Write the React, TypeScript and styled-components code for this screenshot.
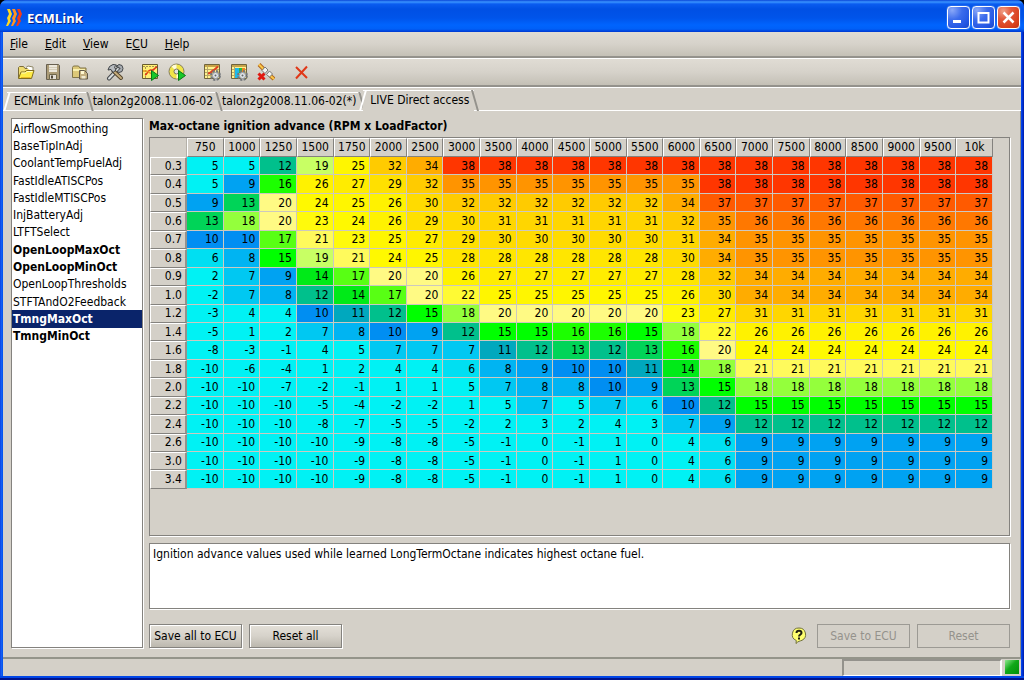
import React, { useState } from "react";
import styled, { createGlobalStyle, css } from "styled-components";

const face = "#d4d0c8";
const sans = '"DejaVu Sans Condensed", "DejaVu Sans", sans-serif';

const GlobalStyle = createGlobalStyle`
  * { box-sizing: border-box; }
  body { margin: 0; background: #000; color: #000; font: 12px/16px ${sans}; }
  button, textarea { font: inherit; color: inherit; }
`;

const Window = styled.div`
  display: flex;
  flex-direction: column;
  min-height: 100vh;
  padding: 0 3px 4px;
  border-radius: 7px 7px 0 0;
  background: linear-gradient(to right, #0831d9 0, #1763f5 1px, #0050ee 3px, #0050ee calc(100% - 3px), #0038e8 calc(100% - 2px), #001ca0 100%);
  box-shadow: inset 0 -2px 0 #00138c, inset 0 -4px 0 #0046e8;
`;

const TitleBar = styled.header`
  display: flex;
  align-items: center;
  gap: 5px;
  height: 32px;
  margin: 0 -3px;
  padding: 3px 4px 0 6px;
  border-radius: 7px 7px 0 0;
  background: linear-gradient(#0a46d8 0, #3a94ff 2px, #0a5cf0 4px, #0050e4 9px, #0054ea 18px, #0064fe 25px, #0060f8 29px, #0038d0 32px);
`;

const Title = styled.h1`
  flex: 1;
  margin: 0;
  color: #fff;
  font: bold 13px/18px "Open Sans", sans-serif;
  text-shadow: 1px 1px 0 #0a1e80;
`;

const Captions = styled.div`
  display: flex;
  gap: 2px;
`;

const CaptionButton = styled.button<{ $close?: boolean }>`
  display: grid;
  width: 23px;
  height: 23px;
  padding: 0;
  place-items: center;
  border: 1px solid #fff;
  border-radius: 4px;
  background: ${(p) =>
    p.$close
      ? "radial-gradient(circle at 25% 20%, #f0a088 0, #e2583a 35%, #d8401c 75%, #c03010 100%)"
      : "radial-gradient(circle at 20% 15%, #8aa8f8 0, #3c6cec 40%, #2458e4 75%, #1848c8 100%)"};
  box-shadow: 0 0 1px #fff;
`;

const bar = css`
  display: flex;
  align-items: center;
  background: linear-gradient(#e0dcd4, #d6d2ca 50%, #c4c0b6);
`;

const MenuBar = styled.nav`
  ${bar}
  gap: 17px;
  height: 26px;
  padding: 0 7px;
  border-bottom: 2px solid #94928c;
`;

const MenuButton = styled.button`
  padding: 0;
  border: 0;
  background: none;
`;

const ToolBar = styled.div`
  ${bar}
  gap: 17px;
  height: 29px;
  padding: 0 14px;
  border-top: 1px solid #fff;
  border-bottom: 2px solid #94928c;
`;

const ToolGroup = styled.div`
  display: flex;
  gap: 9px;
`;

const ToolButton = styled.button`
  width: 18px;
  height: 18px;
  padding: 0;
  border: 0;
  background: none;
  svg { display: block; }
`;

const TabStrip = styled.div`
  display: flex;
  align-items: flex-end;
  height: 24px;
  padding-left: 4px;
  border-top: 1px solid #fff;
  background: ${face};
  box-shadow: inset 0 -1px 0 #fff;
`;

const Tab = styled.button<{ $active: boolean; $lead: boolean }>`
  position: relative;
  height: ${(p) => (p.$active ? 21 : 19)}px;
  margin-right: 2px;
  padding: 0 5px 3px ${(p) => (p.$lead ? 7 : 2)}px;
  border: 0;
  border-top: 1px solid #fff;
  background: ${(p) => (p.$active ? face : "none")};
  white-space: nowrap;
  &::before {
    content: "";
    position: absolute;
    top: -1px;
    bottom: 0;
    left: -1px;
    border-left: ${(p) => (p.$lead ? "2px solid #fff" : "0")};
    transform: skewX(-16deg);
  }
  &::after {
    content: "";
    position: absolute;
    top: -1px;
    bottom: 0;
    right: -2px;
    border-left: 2px solid #94928c;
    transform: skewX(16deg);
  }
`;

const Content = styled.main`
  display: grid;
  flex: 1;
  grid-template-columns: 132px minmax(0, 1fr);
  gap: 6px;
  padding: 7px 10px 9px 8px;
  border-right: 1px solid #8c8a84;
  border-bottom: 2px solid #94948a;
  background: ${face};
`;

const sunken = css`
  border: 1px solid #84827e;
  box-shadow: 1px 1px 0 #fff;
`;

const ListPane = styled.div`
  ${sunken}
  background: #fff;
`;

const ItemList = styled.ul`
  display: grid;
  height: 226px;
  margin: 0;
  padding: 1px 0 0;
  grid-auto-rows: 1fr;
  list-style: none;
`;

const Item = styled.button<{ $bold: boolean; $selected: boolean }>`
  display: block;
  width: 100%;
  height: 100%;
  padding: 0 1px;
  border: 0;
  background: ${(p) => (p.$selected ? "#0a246a" : "transparent")};
  color: ${(p) => (p.$selected ? "#fff" : "#000")};
  font-weight: ${(p) => (p.$bold ? "bold" : "normal")};
  text-align: left;
`;

const Detail = styled.section`
  display: flex;
  flex-direction: column;
  min-width: 0;
`;

const Heading = styled.h2`
  margin: 0 0 3px;
  font: bold 12px/16px ${sans};
`;

const TablePane = styled.div`
  ${sunken}
  flex: 1;
  margin-bottom: 7px;
  padding-right: 16px;
`;

const MapTable = styled.table`
  width: 100%;
  height: 351px;
  border-collapse: separate;
  border-spacing: 0;
  table-layout: fixed;
  line-height: 15px;
  td, th { padding: 0; font-weight: normal; }
`;

const ColHead = styled.th`
  height: 19px;
  border: 1px solid #fff;
  border-right-color: #84827e;
  border-bottom-color: #84827e;
`;

const Corner = styled.td`
  width: 37px;
  border-right: 1px solid #b4b0a8;
`;

const RowHead = styled.th`
  border: 1px solid #fff;
  border-right: 2px solid #94928c;
  border-bottom-color: #84827e;
  && { padding-right: 3px; }
  text-align: right;
`;

const ValueCell = styled.td<{ $fill: string }>`
  border-right: 1px solid #ccc8c0;
  border-bottom: 1px solid #ccc8c0;
  background: ${(p) => p.$fill};
  && { padding: 1px 4px 0 0; }
  text-align: right;
`;

const Description = styled.textarea`
  ${sunken}
  display: block;
  width: 100%;
  height: 66px;
  padding: 2px 3px;
  outline: 0;
  background: #fff;
  resize: none;
`;

const Actions = styled.div`
  display: flex;
  align-items: center;
  gap: 7px;
  margin-top: 15px;
`;

const HelpButton = styled.button`
  width: 16px;
  height: 18px;
  margin: 0 3px 0 auto;
  padding: 0;
  border: 0;
  background: none;
  svg { display: block; }
`;

const PushButton = styled.button`
  width: 93px;
  height: 24px;
  padding: 0;
  border: 1px solid #84827e;
  background: linear-gradient(#e4e0d8, #d6d2ca 50%, #bcb8ae);
  box-shadow: inset 1px 1px 0 #fff, 1px 1px 0 #fff;
  white-space: nowrap;
  &:disabled {
    border-color: #9c9a94;
    background: ${face};
    box-shadow: none;
    color: #94928c;
  }
`;

const StatusBar = styled.footer`
  display: flex;
  justify-content: flex-end;
  gap: 3px;
  height: 17px;
  padding-right: 2px;
  background: ${face};
`;

const StatusField = styled.div`
  width: 160px;
  border: 2px solid #94928c;
  border-right-color: #fff;
  border-bottom: 1px solid #fff;
`;

const StatusLight = styled.div`
  width: 14px;
  height: 14px;
  margin-top: 1px;
  background: linear-gradient(135deg, #90e890, #10a818 45%, #009008);
`;

const fills: Record<number, string> = {
  6: "#00dff2", 7: "#00c8f2", 8: "#00b4f2", 9: "#00a2f2", 10: "#008ef2",
  11: "#00a8be", 12: "#00c08c", 13: "#00d458", 14: "#00ea18", 15: "#00ff00",
  16: "#1cff00", 17: "#58ff14", 18: "#94ff3c", 19: "#c8ff64", 20: "#fffa84",
  21: "#fffa5c", 22: "#fffa34", 23: "#fffa0c", 24: "#fff900", 25: "#fff600",
  26: "#fff200", 27: "#ffec00", 28: "#ffe600", 29: "#ffe000", 30: "#ffdb00",
  31: "#ffd600", 32: "#ffcb00", 34: "#ffac00", 35: "#ff9400", 36: "#ff7800",
  37: "#ff5a00", 38: "#ff3600",
};

const columns = ["750", "1000", "1250", "1500", "1750", "2000", "2500", "3000", "3500", "4000", "4500", "5000", "5500", "6000", "6500", "7000", "7500", "8000", "8500", "9000", "9500", "10k"];

const tail = (n: number): number[] => Array(7).fill(n);

const rows: [string, number[]][] = [
  ["0.3", [5, 5, 12, 19, 25, 32, 34, 38, 38, 38, 38, 38, 38, 38, 38, ...tail(38)]],
  ["0.4", [5, 9, 16, 26, 27, 29, 32, 35, 35, 35, 35, 35, 35, 35, 38, ...tail(38)]],
  ["0.5", [9, 13, 20, 24, 25, 26, 30, 32, 32, 32, 32, 32, 32, 34, 37, ...tail(37)]],
  ["0.6", [13, 18, 20, 23, 24, 26, 29, 30, 31, 31, 31, 31, 31, 32, 35, ...tail(36)]],
  ["0.7", [10, 10, 17, 21, 23, 25, 27, 29, 30, 30, 30, 30, 30, 31, 34, ...tail(35)]],
  ["0.8", [6, 8, 15, 19, 21, 24, 25, 28, 28, 28, 28, 28, 28, 30, 34, ...tail(35)]],
  ["0.9", [2, 7, 9, 14, 17, 20, 20, 26, 27, 27, 27, 27, 27, 28, 32, ...tail(34)]],
  ["1.0", [-2, 7, 8, 12, 14, 17, 20, 22, 25, 25, 25, 25, 25, 26, 30, ...tail(34)]],
  ["1.2", [-3, 4, 4, 10, 11, 12, 15, 18, 20, 20, 20, 20, 20, 23, 27, ...tail(31)]],
  ["1.4", [-5, 1, 2, 7, 8, 10, 9, 12, 15, 15, 16, 16, 15, 18, 22, ...tail(26)]],
  ["1.6", [-8, -3, -1, 4, 5, 7, 7, 7, 11, 12, 13, 12, 13, 16, 20, ...tail(24)]],
  ["1.8", [-10, -6, -4, 1, 2, 4, 4, 6, 8, 9, 10, 10, 11, 14, 18, ...tail(21)]],
  ["2.0", [-10, -10, -7, -2, -1, 1, 1, 5, 7, 8, 8, 10, 9, 13, 15, ...tail(18)]],
  ["2.2", [-10, -10, -10, -5, -4, -2, -2, 1, 5, 7, 5, 7, 6, 10, 12, ...tail(15)]],
  ["2.4", [-10, -10, -10, -8, -7, -5, -5, -2, 2, 3, 2, 4, 3, 7, 9, ...tail(12)]],
  ["2.6", [-10, -10, -10, -10, -9, -8, -8, -5, -1, 0, -1, 1, 0, 4, 6, ...tail(9)]],
  ["3.0", [-10, -10, -10, -10, -9, -8, -8, -5, -1, 0, -1, 1, 0, 4, 6, ...tail(9)]],
  ["3.4", [-10, -10, -10, -10, -9, -8, -8, -5, -1, 0, -1, 1, 0, 4, 6, ...tail(9)]],
];

const items: [string, boolean][] = [
  ["AirflowSmoothing", false], ["BaseTipInAdj", false], ["CoolantTempFuelAdj", false],
  ["FastIdleATISCPos", false], ["FastIdleMTISCPos", false], ["InjBatteryAdj", false],
  ["LTFTSelect", false], ["OpenLoopMaxOct", true], ["OpenLoopMinOct", true],
  ["OpenLoopThresholds", false], ["STFTAndO2Feedback", false], ["TmngMaxOct", true],
  ["TmngMinOct", true],
];

const tabs = ["ECMLink Info", "talon2g2008.11.06-02", "talon2g2008.11.06-02(*)", "LIVE Direct access"];

const Icon = ({ children }: { children: React.ReactNode }) => (
  <svg width="18" height="18" viewBox="0 0 18 18" fill="none" aria-hidden="true">{children}</svg>
);

const Logo = () => (
  <svg width="16" height="19" viewBox="0 0 16 19" aria-hidden="true">
    <path d="M1 1h3l2 5-2 5 1 2-3 5H0l2-5-1-3 2-4z" fill="#ffd820" />
    <path d="M6 1h3l2 5-2 5 1 2-3 5H5l2-5-1-3 2-4z" fill="#ff9420" />
    <path d="M11 1h3l2 5-2 5 1 2-3 5h-2l2-5-1-3 2-4z" fill="#f03c18" />
  </svg>
);

const OpenIcon = () => (
  <Icon>
    <path d="M1.500 15V4.500l1-1h4l1.500 2h6v3" fill="#f0dc70" stroke="#7c6c38" />
    <path d="M9 4.500l2-1.500 5 1v5" fill="#fff" stroke="#908868" />
    <path d="M1.500 15.500l2.500-6.500h4l1.500-1.500h7.500l-2.500 8z" fill="#ffec48" stroke="#806c20" />
    <path d="M4.500 10h4l1.500-1.500h5.500" stroke="#fffcc0" />
    <path d="M4 14.500h9.500" stroke="#e8b828" />
  </Icon>
);

const SaveIcon = () => (
  <Icon>
    <path d="M2.500 1.500h12l1 1v14h-13z" fill="#ac9c78" stroke="#686050" />
    <path d="M5 2h8v7H5z" fill="#ece8dc" />
    <path d="M5 4.500h8M5 6.500h8" stroke="#d4ccb8" />
    <path d="M5.500 11.500h7v5h-7z" fill="#e4e0d8" stroke="#70684c" />
    <path d="M7 12.500h2v3H7z" fill="#504838" />
  </Icon>
);

const FolderDocIcon = () => (
  <Icon>
    <path d="M1.500 14.500V4.500l1-1.500h5l1.500 2h6v9.500z" fill="#dcc878" stroke="#807448" />
    <path d="M2 7h12" stroke="#f8f0b0" strokeWidth="2" />
    <path d="M8.500 7.500h5l3 3v5.500h-8z" fill="#c4b080" stroke="#605848" />
    <path d="M10 8h3v3h-3z" fill="#fff8d0" />
    <path d="M10.500 13h4v2.500h-4z" fill="#f0ead0" />
  </Icon>
);

const ToolsIcon = () => (
  <Icon>
    <path d="M3 15.500L12 6" stroke="#44484c" strokeWidth="4" strokeLinecap="round" />
    <path d="M3 15.500L12 6" stroke="#d8dcdc" strokeWidth="2" strokeLinecap="round" />
    <path d="M10 3.500l3-2 3 1 1 3-1 3-3 1-2-1 3-3-1.500-1.500z" fill="#a8acb0" stroke="#44484c" />
    <path d="M7.500 8l7.500 7" stroke="#54442c" strokeWidth="4" strokeLinecap="round" />
    <path d="M8 8.500l7 6.500" stroke="#c4ac7c" strokeWidth="2" strokeLinecap="round" />
    <path d="M2 7l1.500-3.500L7 1.500l3.500.5L8.500 4l1.500 3-3 2.500L5 6.500z" fill="#b8bcc0" stroke="#3c4044" />
  </Icon>
);

const PlayBadge = () => <path d="M10.500 7.500l7 5-7 5z" fill="#18c828" stroke="#087818" />;

const PlayLogIcon = () => (
  <Icon>
    <path d="M1.500 1.500h15v14h-15z" fill="#fff074" stroke="#685c30" />
    <path d="M2 3.500h14M4.500 4v11" stroke="#a89450" strokeDasharray="2 1" />
    <path d="M4 12c3-1 3-6 6-5s3-2 6-3" stroke="#e03818" strokeWidth="1.500" />
    <path d="M2 8h3c3 0 4 4 9 3" stroke="#e89820" strokeWidth="1.500" />
    <PlayBadge />
  </Icon>
);

const PlayDiscIcon = () => (
  <Icon>
    <circle cx="8.500" cy="8.500" r="7.500" fill="#f0e448" stroke="#888060" />
    <path d="M8.500 8.500L3.500 3.500a7 7 0 015-2zM8.500 8.500l5 5a7 7 0 01-5 2z" fill="#fffcd8" />
    <circle cx="8.500" cy="8.500" r="2.500" fill="#e4e4e0" stroke="#787460" />
    <PlayBadge />
  </Icon>
);

const GearBadge = () => (
  <>
    <circle cx="12.500" cy="12.500" r="4" stroke="#74787c" strokeWidth="3" strokeDasharray="2 1.140" />
    <circle cx="12.500" cy="12.500" r="3" fill="#e0e4e8" stroke="#a0a4a8" />
    <circle cx="12.500" cy="12.500" r="1" fill="#606468" />
  </>
);

const GridBase = () => (
  <>
    <path d="M1.500 1.500h15v14h-15z" fill="#fff490" stroke="#70643c" />
    <path d="M2 3h14" stroke="#c8a448" strokeWidth="2" />
    <path d="M2 6.500h14M2 9.500h14M2 12.500h14M4.500 2v13" stroke="#b8a868" />
  </>
);

const LogSetupIcon = () => (
  <Icon>
    <GridBase />
    <path d="M5 10.500c4 0 3-3 6-3.500l4-3.500" stroke="#e04020" strokeWidth="2" />
    <GearBadge />
  </Icon>
);

const MapSetupIcon = () => (
  <Icon>
    <GridBase />
    <path d="M5 5h4v10H5z" fill="#20b8e8" />
    <path d="M9 5h3v5H9z" fill="#20c040" />
    <path d="M12 5h3v4h-3z" fill="#f08020" />
    <GearBadge />
  </Icon>
);

const DisconnectIcon = () => (
  <Icon>
    <path d="M2 1.500l5 5M12.500 12l4.500 4" stroke="#b06820" strokeWidth="4" />
    <path d="M2 1.500l5 5M12.500 12l4.500 4" stroke="#fcc848" strokeWidth="2" />
    <path d="M5 7.500L8 4l3 3-3 3.500zM9.500 11.500l3-3.500 3 3-3 3z" fill="#f4f4f0" stroke="#787878" />
    <path d="M1.500 10.500l6 6M7.500 10.500l-6 6" stroke="#e01810" strokeWidth="3" />
  </Icon>
);

const DeleteIcon = () => (
  <Icon>
    <path d="M4 4l11 11M15 3.500l-11 12" stroke="#e03818" strokeWidth="2" />
  </Icon>
);

const toolGroups: [string, () => React.ReactElement][][] = [
  [["Open", OpenIcon], ["Save", SaveIcon], ["Save copy", FolderDocIcon]],
  [["Settings", ToolsIcon]],
  [["Start log", PlayLogIcon], ["Start capture", PlayDiscIcon]],
  [["Log setup", LogSetupIcon], ["Map setup", MapSetupIcon], ["Disconnect", DisconnectIcon]],
  [["Close", DeleteIcon]],
];

export default function App() {
  const [selected, setSelected] = useState("TmngMaxOct");
  const [activeTab, setActiveTab] = useState(3);

  return (
    <>
      <GlobalStyle />
      <Window>
        <TitleBar>
          <Logo />
          <Title>ECMLink</Title>
          <Captions>
            <CaptionButton aria-label="Minimize">
              <svg width="17" height="17"><path d="M3 11h8v3H3z" fill="#fff" /></svg>
            </CaptionButton>
            <CaptionButton aria-label="Maximize">
              <svg width="17" height="17"><path d="M3.500 3v10.500h10V3M3 4h11" stroke="#fff" strokeWidth="2" fill="none" /></svg>
            </CaptionButton>
            <CaptionButton $close aria-label="Close window">
              <svg width="17" height="17"><path d="M3.500 3.500l10 10M13.500 3.500l-10 10" stroke="#fff" strokeWidth="2.500" /></svg>
            </CaptionButton>
          </Captions>
        </TitleBar>
        <MenuBar>
          <MenuButton><u>F</u>ile</MenuButton>
          <MenuButton><u>E</u>dit</MenuButton>
          <MenuButton><u>V</u>iew</MenuButton>
          <MenuButton>E<u>C</u>U</MenuButton>
          <MenuButton><u>H</u>elp</MenuButton>
        </MenuBar>
        <ToolBar>
          {toolGroups.map((group, g) => (
            <ToolGroup key={g}>
              {group.map(([label, Glyph]) => (
                <ToolButton key={label} aria-label={label}><Glyph /></ToolButton>
              ))}
            </ToolGroup>
          ))}
        </ToolBar>
        <TabStrip role="tablist">
          {tabs.map((label, i) => (
            <Tab
              key={label}
              role="tab"
              aria-selected={i === activeTab}
              $active={i === activeTab}
              $lead={i === 0 || i === activeTab}
              onClick={() => setActiveTab(i)}
            >
              {label}
            </Tab>
          ))}
        </TabStrip>
        <Content>
          <ListPane>
            <ItemList>
              {items.map(([name, bold]) => (
                <li key={name}>
                  <Item $bold={bold} $selected={name === selected} onClick={() => setSelected(name)}>{name}</Item>
                </li>
              ))}
            </ItemList>
          </ListPane>
          <Detail>
            <Heading id="map-title">Max-octane ignition advance (RPM x LoadFactor)</Heading>
            <TablePane>
              <MapTable aria-labelledby="map-title">
                <thead>
                  <tr>
                    <Corner />
                    {columns.map((c) => <ColHead key={c} scope="col">{c}</ColHead>)}
                  </tr>
                </thead>
                <tbody>
                  {rows.map(([load, values]) => (
                    <tr key={load}>
                      <RowHead scope="row">{load}</RowHead>
                      {values.map((v, i) => (
                        <ValueCell key={i} $fill={fills[v] ?? "#00f2f4"}>{v}</ValueCell>
                      ))}
                    </tr>
                  ))}
                </tbody>
              </MapTable>
            </TablePane>
            <Description
              readOnly
              aria-label="Description"
              value="Ignition advance values used while learned LongTermOctane indicates highest octane fuel."
            />
            <Actions>
              <PushButton>Save all to ECU</PushButton>
              <PushButton>Reset all</PushButton>
              <HelpButton aria-label="Help on this table">
                <svg width="16" height="18" viewBox="0 0 16 18" fill="none">
                  <path d="M8 1a6.500 6.500 0 013 12.300c-2 .8-4 .9-6 3.200l.3-3A6.500 6.500 0 018 1z" fill="#ffff70" stroke="#70703c" />
                  <path d="M5.500 6c0-3 5-3 5 0 0 1.500-2.500 1.500-2.500 3.500M8 10.500v2" stroke="#202010" strokeWidth="2" />
                </svg>
              </HelpButton>
              <PushButton disabled>Save to ECU</PushButton>
              <PushButton disabled>Reset</PushButton>
            </Actions>
          </Detail>
        </Content>
        <StatusBar>
          <StatusField />
          <StatusLight />
        </StatusBar>
      </Window>
    </>
  );
}
